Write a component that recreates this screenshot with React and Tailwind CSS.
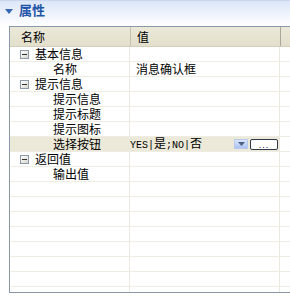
import React from "react";

const cjk = "font-['Noto_Sans_CJK_SC','Noto_Sans',sans-serif]";

const rows = [
  { kind: "group", name: "基本信息" },
  { kind: "item", name: "名称", value: "消息确认框" },
  { kind: "group", name: "提示信息" },
  { kind: "item", name: "提示信息" },
  { kind: "item", name: "提示标题" },
  { kind: "item", name: "提示图标" },
  { kind: "item", name: "选择按钮", selected: true, editor: true },
  { kind: "group", name: "返回值" },
  { kind: "item", name: "输出值" },
];

const Minus = () => (
  <span className="w-[9px] h-[9px] border border-[#8c99a8] bg-gradient-to-br from-white to-[#d8d8d0] flex items-center justify-center">
    <span className="w-[5px] h-px bg-[#333]" />
  </span>
);

const Editor = () => (
  <div className="flex items-center w-full pr-[1px]">
    <span className="text-[12px] leading-[14px] text-black whitespace-nowrap">
      <span className="font-['Liberation_Mono',monospace] text-[10px]">YES|</span>
      是
      <span className="font-['Liberation_Mono',monospace] text-[10px]">;NO|</span>
      否
    </span>
    <span className="ml-auto w-[14px] h-[10px] bg-gradient-to-b from-[#dbe6fd] to-[#aec3f2] border border-[#b8c9ee] flex items-center justify-center">
      <svg width="7" height="4" viewBox="0 0 7 4">
        <path d="M0 0h7L3.5 4z" fill="#4d6185" />
      </svg>
    </span>
    <span className="ml-[2px] w-[28px] h-[11px] border border-[#2e3a4a] rounded-[2px] bg-white flex items-end justify-center text-[9px] leading-[8px] text-black font-['Liberation_Sans',sans-serif] tracking-[1px]">
      ...
    </span>
  </div>
);

const Row = ({ row }) => (
  <div
    className={`flex h-[15px] border-b border-[#efede3] ${row.selected ? "bg-[#ece9d8]" : ""}`}
  >
    <div className="w-[120px] flex items-center border-r border-[#ebe9df]">
      {row.kind === "group" ? (
        <>
          <span className="ml-[10px]">
            <Minus />
          </span>
          <span className="ml-[6px] text-[12px] leading-[14px]">{row.name}</span>
        </>
      ) : (
        <span className="ml-[43px] text-[12px] leading-[14px]">{row.name}</span>
      )}
    </div>
    <div className="w-[150px] flex items-center border-r border-[#ebe9df]">
      {row.editor ? (
        <Editor />
      ) : (
        <span className="ml-[6px] text-[12px] leading-[14px]">{row.value}</span>
      )}
    </div>
    <div className="flex-1 bg-white" />
  </div>
);

export default function App() {
  const blanks = Array.from({ length: 8 });
  return (
    <div className={`w-[290px] h-[299px] bg-white overflow-hidden ${cjk} text-black`}>
      <div className="h-[26px] border-t border-[#c9d7ef] bg-gradient-to-b from-[#dce6f8] to-white flex items-start pt-[2px]">
        <svg className="ml-[5px] mt-[6px]" width="8" height="5" viewBox="0 0 8 5">
          <path d="M0 0h8L4 5z" fill="#3466b4" />
        </svg>
        <span className="ml-[6px] text-[13px] leading-[14px] font-bold text-[#1f55a8]">属性</span>
      </div>
      <div className="ml-[9px] h-[267px] border-t border-l border-b border-[#8799ab] overflow-hidden">
        <div className="flex h-[20px] bg-gradient-to-b from-[#ebe8d8] to-[#e3dfcc] border-b border-[#d3cfbd]">
          <div className="w-[121px] flex items-center border-r border-[#c5c2b2]">
            <span className="ml-[11px] text-[12px] leading-[14px]">名称</span>
          </div>
          <div className="w-[150px] flex items-center border-r border-[#aaa79a]">
            <span className="ml-[6px] text-[12px] leading-[14px]">值</span>
          </div>
          <div className="flex-1" />
        </div>
        {rows.map((r, i) => (
          <Row key={i} row={r} />
        ))}
        {blanks.map((_, i) => (
          <Row key={"b" + i} row={{ kind: "item", name: "" }} />
        ))}
      </div>
    </div>
  );
}
